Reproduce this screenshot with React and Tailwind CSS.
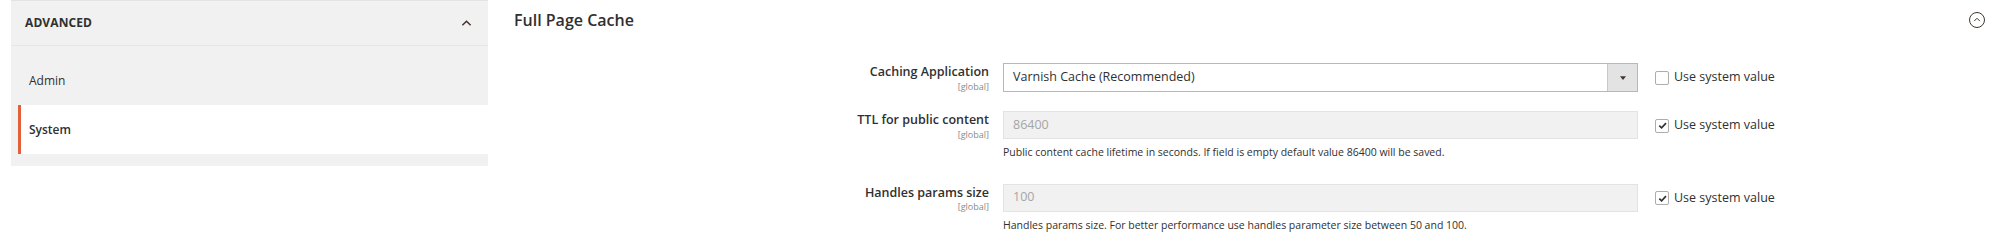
import React from "react";

const Chevron = ({ className }) => (
  <svg viewBox="0 0 12 8" className={className} fill="none" stroke="currentColor" strokeWidth="1.6">
    <path d="M1.5 6.5 L6 2 L10.5 6.5" />
  </svg>
);

const Checkbox = ({ checked }) => (
  <span className="flex h-[14px] w-[14px] items-center justify-center rounded-[2px] border border-[#adadad] bg-white">
    {checked && (
      <svg viewBox="0 0 12 12" className="h-[11px] w-[11px]" fill="none" stroke="#303030" strokeWidth="1.8">
        <path d="M2.5 6.2 L5 8.6 L9.8 3.4" />
      </svg>
    )}
  </span>
);

const FieldLabel = ({ label }) => (
  <div className="w-[515px] shrink-0 pr-[14px] text-right leading-none">
    <div className="pt-[3px] text-[12.5px] font-semibold text-[#303030]">{label}</div>
    <div className="mt-[3px] text-[9px] text-[#8a8a8a]">[global]</div>
  </div>
);

const SystemValue = ({ checked }) => (
  <label className="ml-[17px] flex h-[29px] items-center gap-[5px] text-[12.5px] text-[#303030]">
    <Checkbox checked={checked} />
    <span>Use system value</span>
  </label>
);

const App = () => {
  return (
    <div className="flex h-[242px] w-[2000px] bg-white font-['Open_Sans',sans-serif] text-[#303030]">
      {/* sidebar */}
      <div className="ml-[11px] w-[477px] shrink-0 self-start border-t border-[#e3e3e3] bg-[#f1f1f1]">
        <div className="flex h-[45px] items-center justify-between border-b border-[#e6e6e6] pl-[14px] pr-[16px]">
          <span className="text-[12px] font-bold tracking-[0.1px] text-[#303030]">ADVANCED</span>
          <Chevron className="h-[8px] w-[11px] text-[#41362f]" />
        </div>
        <div className="pb-[12px] pt-[10px]">
          <div className="ml-[7px] flex h-[49px] items-center pl-[11px] text-[12px] text-[#303030]">Admin</div>
          <div className="ml-[7px] flex h-[49px] items-center border-l-[3px] border-[#e2603a] bg-white pl-[8px] text-[12px] font-semibold text-[#303030]">
            System
          </div>
        </div>
      </div>

      {/* content */}
      <div className="flex-1 pl-[26px] pr-[15px]">
        <div className="flex h-[40px] items-center justify-between">
          <h2 className="text-[16px] font-semibold text-[#303030]">Full Page Cache</h2>
          <span className="flex h-[16px] w-[16px] items-center justify-center rounded-full border border-[#41362f]">
            <Chevron className="mb-[1px] h-[5px] w-[8px] text-[#41362f]" />
          </span>
        </div>

        <div className="-ml-[26px] flex pt-[23px]">
          <FieldLabel label="Caching Application" />
          <div className="flex h-[29px] w-[635px] items-stretch border border-[#a9bad6] bg-white">
            <span className="flex flex-1 items-center pl-[9px] text-[12.5px] text-[#303030]">Varnish Cache (Recommended)</span>
            <span className="flex w-[30px] items-center justify-center border-l border-[#c8c8c8] bg-[#e3e3e3]">
              <svg viewBox="0 0 8 5" className="h-[4px] w-[6px]" fill="#41362f">
                <path d="M0 0 H8 L4 5 Z" />
              </svg>
            </span>
          </div>
          <SystemValue checked={false} />
        </div>

        <div className="-ml-[26px] mt-[19px] flex">
          <FieldLabel label="TTL for public content" />
          <div className="w-[635px]">
            <div className="flex h-[28px] items-center border border-[#e3e3e3] bg-[#f1f1f1] pl-[9px] text-[12.5px] text-[#a6a6a6]">86400</div>
            <p className="mt-[6px] text-[10.5px] text-[#303030]">
              Public content cache lifetime in seconds. If field is empty default value 86400 will be saved.
            </p>
          </div>
          <SystemValue checked={true} />
        </div>

        <div className="-ml-[26px] mt-[23px] flex">
          <FieldLabel label="Handles params size" />
          <div className="w-[635px]">
            <div className="flex h-[28px] items-center border border-[#e3e3e3] bg-[#f1f1f1] pl-[9px] text-[12.5px] text-[#a6a6a6]">100</div>
            <p className="mt-[6px] text-[10.5px] text-[#303030]">
              Handles params size. For better performance use handles parameter size between 50 and 100.
            </p>
          </div>
          <SystemValue checked={true} />
        </div>
      </div>
    </div>
  );
};

export default App;
